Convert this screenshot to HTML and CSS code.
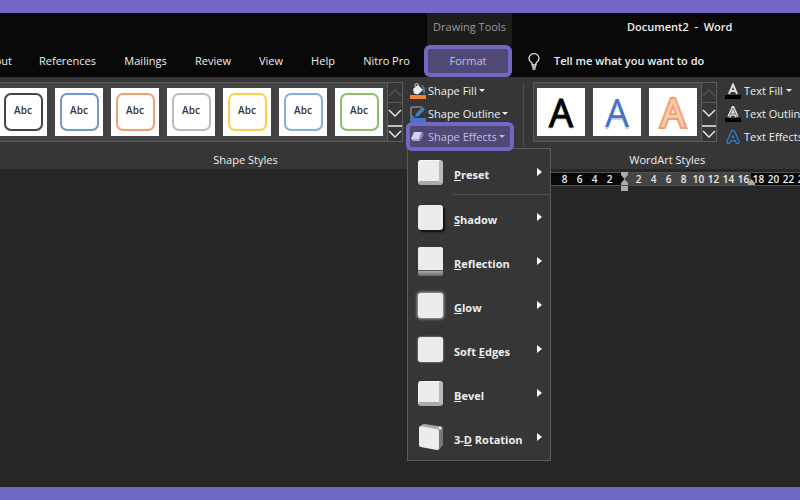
FILE: index.html
```html
<!DOCTYPE html>
<html lang="en">
<head>
<meta charset="utf-8">
<title>Document2 - Word</title>
<link rel="stylesheet" href="styles.css">
</head>
<body>
<header class="top">
  <div class="titlebar">
    <span class="context">Drawing Tools</span>
    <h1 class="doc-title">Document2&nbsp; -&nbsp; Word</h1>
  </div>
  <nav class="tabs">
    <a class="tab clipped" href="#layout">Layout</a>
    <a class="tab" href="#references">References</a>
    <a class="tab" href="#mailings">Mailings</a>
    <a class="tab" href="#review">Review</a>
    <a class="tab" href="#view">View</a>
    <a class="tab" href="#help">Help</a>
    <a class="tab" href="#nitro">Nitro Pro</a>
    <a class="tab marked" href="#format">Format</a>
    <button class="tell">
      <svg width="12" height="17" viewBox="0 0 12 17" fill="none" stroke="#eee" stroke-width="1.3"><path d="M4 12v-2C2 8.600 1 7.300 1 5.500a5 4.800 0 0 1 10 0C11 7.300 10 8.600 8 10v2zM4 14h4M4.500 16h3"/></svg>
      <span>Tell me what you want to do</span>
    </button>
  </nav>
</header>

<section class="ribbon">
  <div class="group shapes">
    <div class="tools">
      <div class="gallery">
        <div class="thumbs">
          <button class="thumb"><span class="shape black">Abc</span></button>
          <button class="thumb"><span class="shape blue">Abc</span></button>
          <button class="thumb"><span class="shape orange">Abc</span></button>
          <button class="thumb"><span class="shape gray">Abc</span></button>
          <button class="thumb"><span class="shape yellow">Abc</span></button>
          <button class="thumb"><span class="shape sky">Abc</span></button>
          <button class="thumb"><span class="shape green">Abc</span></button>
        </div>
        <div class="scroll">
          <button aria-label="Previous row" class="off"><svg width="14" height="9" viewBox="0 0 14 9"><path d="M1 8l6-6 6 6"/></svg></button>
          <button aria-label="Next row"><svg width="14" height="9" viewBox="0 0 14 9"><path d="M1 1l6 6 6-6"/></svg></button>
          <button aria-label="More styles"><svg width="14" height="14" viewBox="0 0 14 14"><path d="M0 1h14M1 6l6 6 6-6"/></svg></button>
        </div>
      </div>
      <div class="commands">
        <button class="command">
          <svg width="16" height="16" viewBox="0 0 16 16"><path d="M0 12h16v4H0z" fill="#f58233"/><path d="M3 6l5-4 5 5-5 4.500-4-1z" fill="#eee"/><path d="M5 4V1.500Q6-.5 8 1v4" fill="none" stroke="#ddd"/><path d="M11 2q5 0 4 9l-2-1V6z" fill="#397bb8"/></svg>
          <span>Shape Fill</span><i class="caret"></i>
        </button>
        <button class="command">
          <svg width="16" height="16" viewBox="0 0 16 16"><path d="M0 12h16v4H0z" fill="#3d78cf"/><path d="M12 1H1v10h3" fill="none" stroke="#aaa"/><path d="M5 11l1-3.500L12.500 1 15 3.500 8.500 10z" fill="#3c83c4"/></svg>
          <span>Shape Outline</span><i class="caret"></i>
        </button>
        <div class="effects">
          <button class="command marked">
            <svg width="13" height="10" viewBox="0 0 13 10"><path d="M3 0h8L8 7H0z" fill="#d6d0f2"/><path d="M11 0q2 1 1 4l-3 5-1-2z" fill="#8e86bb"/><path d="M0 7h8l1 2H2z" fill="#aaa2d2"/></svg>
            <span>Shape Effects</span><i class="caret"></i>
          </button>
          <div class="menu" role="menu">
            <button class="item" role="menuitem"><span class="icon bevel"></span><span class="name"><u>P</u>reset</span><i class="arrow"></i></button>
            <hr>
            <button class="item" role="menuitem"><span class="icon shadow"></span><span class="name"><u>S</u>hadow</span><i class="arrow"></i></button>
            <button class="item" role="menuitem"><span class="icon reflect"></span><span class="name"><u>R</u>eflection</span><i class="arrow"></i></button>
            <button class="item" role="menuitem"><span class="icon glow"></span><span class="name"><u>G</u>low</span><i class="arrow"></i></button>
            <button class="item" role="menuitem"><span class="icon soft"></span><span class="name">Soft <u>E</u>dges</span><i class="arrow"></i></button>
            <button class="item" role="menuitem"><span class="icon bevel"></span><span class="name"><u>B</u>evel</span><i class="arrow"></i></button>
            <button class="item" role="menuitem"><svg width="26" height="28" viewBox="0 0 26 28"><path d="M1 5l4-4 17 2q3 0 3 3v16l-4 5-18-3z" fill="#777"/><path d="M2 3l4-2 17 3-3 2z" fill="#aaa"/><path d="M1 5q0-2 2-2l16 3q2 0 2 2v17q0 2-2 2L3 24q-2 0-2-2z" fill="#ececec"/><circle cx="22" cy="5" r="1.500" fill="#fff"/></svg><span class="name">3-<u>D</u> Rotation</span><i class="arrow"></i></button>
          </div>
        </div>
      </div>
    </div>
    <h2 class="group-name">Shape Styles</h2>
  </div>

  <div class="group wordart">
    <div class="tools">
      <div class="gallery">
        <div class="thumbs">
          <button class="thumb letter ink">A</button>
          <button class="thumb letter azure">A</button>
          <button class="thumb letter peach">A</button>
        </div>
        <div class="scroll">
          <button aria-label="Previous row" class="off"><svg width="14" height="9" viewBox="0 0 14 9"><path d="M1 8l6-6 6 6"/></svg></button>
          <button aria-label="Next row"><svg width="14" height="9" viewBox="0 0 14 9"><path d="M1 1l6 6 6-6"/></svg></button>
          <button aria-label="More styles"><svg width="14" height="14" viewBox="0 0 14 14"><path d="M0 1h14M1 6l6 6 6-6"/></svg></button>
        </div>
      </div>
      <div class="commands">
        <button class="command">
          <svg width="16" height="16" viewBox="0 0 16 16"><path d="M0 12h16v4H0z" fill="#000"/><path d="M4 11L8 1.500 12 11M5.500 8h5" fill="none" stroke="#ddd" stroke-width="2"/></svg>
          <span>Text Fill</span><i class="caret"></i>
        </button>
        <button class="command">
          <svg width="16" height="16" viewBox="0 0 16 16"><path d="M0 12h16v4H0z" fill="#000"/><path d="M4 11L8 2 12 11M5.500 8h5" fill="none" stroke="#ddd" stroke-width="3.500"/><path d="M4 11L8 2 12 11M5.500 8h5" fill="none" stroke="#777" stroke-width="1"/></svg>
          <span>Text Outline</span><i class="caret"></i>
        </button>
        <button class="command">
          <svg width="16" height="16" viewBox="0 0 16 16" fill="none" stroke-linejoin="round" stroke-linecap="round"><path d="M3.500 13L8 3l4.500 10M5.500 10h5" stroke="#3a7fc8" stroke-width="4.500"/><path d="M3.500 13L8 3l4.500 10M5.500 10h5" stroke="#2b3644" stroke-width="2"/></svg>
          <span>Text Effects</span><i class="caret"></i>
        </button>
      </div>
    </div>
    <h2 class="group-name">WordArt Styles</h2>
  </div>
</section>

<main class="page">
  <div class="ruler">
    <div class="band outside"><span>8</span><span>6</span><span>4</span><span>2</span></div>
    <div class="band inside"><span>2</span><span>4</span><span>6</span><span>8</span><span>10</span><span>12</span><span>14</span><span>16</span>
      <svg class="indent" width="9" height="20" viewBox="0 0 9 20" fill="#aaa"><path d="M1 0h7v3L4.500 7 1 3zM4.500 7L8 11v2H1v-2zM1 14h7v5H1z"/></svg>
      <svg class="right-indent" width="9" height="7" viewBox="0 0 9 7" fill="#aaa"><path d="M4.500 0L8 4v2H1V4z"/></svg>
    </div>
    <div class="band rest"><span>18</span><span>20</span><span>22</span><span>24</span></div>
  </div>
</main>
</body>
</html>
```
FILE: styles.css
```css
* { box-sizing: border-box; }

body {
  margin: 0;
  min-height: 100vh;
  display: flex;
  flex-direction: column;
  border-top: 13px solid #7068c5;
  border-bottom: 13px solid #7068c5;
  background: #262626;
  color: #eee;
  font: 500 11px/16px "Open Sans", "Noto Sans", sans-serif;
  overflow: hidden;
}

button {
  border: 0;
  padding: 0;
  background: none;
  color: inherit;
  font: inherit;
}

a { color: inherit; text-decoration: none; }
h1, h2 { margin: 0; font: inherit; }

.top { background: #080808; }

.titlebar {
  display: grid;
  grid-template-columns: 427px 85px 1fr;
  height: 32px;
}

.context {
  grid-column: 2;
  padding-top: 6px;
  background: #1c1c1c;
  color: #999;
  text-align: center;
  white-space: nowrap;
}

.doc-title {
  padding: 6px 0 0 115px;
  font-weight: 600;
  white-space: nowrap;
}

.tabs {
  display: grid;
  grid-template-columns: 25px 85px 71px 64px 52px 52px 75px 88px 1fr;
  align-items: center;
  height: 32px;
}

.tab { text-align: center; white-space: nowrap; }

.clipped {
  display: flex;
  justify-content: flex-end;
  padding-right: 13px;
}

.marked {
  border: 4px solid #7068c5;
  border-radius: 6px;
  background: #4f4975;
  color: #c3bce8;
}

.tab.marked { padding: 4px 0; }

.tell {
  display: flex;
  align-items: center;
  gap: 14px;
  padding-left: 16px;
  font-weight: 600;
  white-space: nowrap;
}

.ribbon {
  display: flex;
  height: 92px;
  padding-top: 5px;
  background: #363636;
}

.group { flex: none; }
.tools { display: flex; height: 70px; }
.shapes { width: 523px; }
.wordart { padding-left: 10px; position: relative; }

.wordart::before {
  content: "";
  position: absolute;
  left: 0;
  top: 0;
  width: 1px;
  height: 66px;
  background: #4c4c4c;
}

.gallery {
  display: flex;
  height: 60px;
  border: 1px solid #5c5c5c;
  background: #424242;
}

.thumbs { display: flex; gap: 8px; padding: 5px 4px 5px 3px; }
.shapes .gallery { border-left: 0; }
.shapes .thumbs { padding-left: 0; margin-left: -1px; }

.thumb {
  display: grid;
  place-items: center;
  width: 48px;
  height: 48px;
  background: #fff;
  color: #333;
}

.shape {
  width: 39px;
  height: 38px;
  border: 2px solid;
  border-radius: 7px;
  padding-top: 6px;
  font-size: 10px;
  font-weight: 600;
  line-height: 18px;
}

.black { border-color: #444; }
.blue { border-color: #7096d6; }
.orange { border-color: #f1a171; }
.gray { border-color: #bbb; }
.yellow { border-color: #fcd04e; }
.sky { border-color: #82b1e0; }
.green { border-color: #8dbf70; }

.letter {
  font-size: 38px;
  font-weight: 500;
  line-height: 48px;
}

.ink { color: #000; text-shadow: 0 1px 2px #999; -webkit-text-stroke: 1px #000; }
.azure { color: #4472c4; text-shadow: 0 2px 1px #b9c8e6; }
.peach { color: #f8cbad; -webkit-text-stroke: 4px #f1a070; paint-order: stroke fill; }

.scroll {
  display: grid;
  grid-template-rows: 20px 20px 18px;
  width: 15px;
  border-left: 1px solid #5c5c5c;
}

.scroll button { display: grid; place-items: center; background: #363636; }
.scroll .off { border-bottom: 1px solid #5c5c5c; }
.scroll path { fill: none; stroke: #eee; stroke-width: 1.4; }
.scroll .off path { stroke: #555; }

.commands { padding-left: 7px; }

.command {
  display: flex;
  align-items: center;
  gap: 3px;
  height: 23px;
  padding-left: 1px;
  white-space: nowrap;
}

.commands > .command:first-child { margin-top: -3px; }
.shapes .commands { padding-left: 3px; }
.shapes .command { gap: 2px; padding-left: 4px; }

.caret {
  border: 3px solid transparent;
  border-top-color: currentColor;
  border-bottom: 0;
}

.effects { position: relative; }

.effects .command {
  position: relative;
  z-index: 2;
  height: 29px;
  width: 108px;
  margin-top: -3px;
  padding-left: 1px;
}

.effects .command svg { margin-right: 2px; }

.group-name { text-align: center; }
.shapes .group-name { padding-right: 32px; }
.wordart .group-name { padding-right: 14px; }

.menu {
  position: absolute;
  z-index: 1;
  top: 26px;
  left: 1px;
  width: 144px;
  padding: 1px 0;
  border: 1px solid #5c5c5c;
  background: #363636;
  font-weight: 700;
}

.item {
  display: grid;
  grid-template-columns: 26px 73px 5px;
  align-items: center;
  column-gap: 10px;
  width: 100%;
  height: 44px;
  padding-left: 10px;
  text-align: left;
  white-space: nowrap;
}

.item .name { padding-top: 5px; }

.arrow {
  border: 4px solid transparent;
  border-left: 5px solid #fff;
  border-right: 0;
}

.menu hr {
  height: 1px;
  margin: 0 0 0 45px;
  border: 0;
  background: #505050;
}

.icon {
  width: 25px;
  height: 25px;
  border-radius: 3px;
  background: #ececec;
}

.bevel {
  border: solid;
  border-width: 1px 4px 4px 1px;
  border-color: #f6f6f6 #bbb #aaa #f6f6f6;
}

.shadow { box-shadow: 2px 2px 2px #111; }

.reflect {
  height: 29px;
  border-radius: 2px;
  background: linear-gradient(#ececec 23px, #555 23px, #555 24px, #aaa 24px, #666);
}

.glow { box-shadow: 0 0 3px 1px #aaa; }
.soft { box-shadow: 0 0 2px #ccc; }

.page { flex: 1; padding-top: 3px; }

.ruler {
  display: flex;
  height: 14px;
  margin-left: 550px;
  border: 1px solid #505050;
  border-right: 0;
  background: #080808;
  font-size: 10px;
  font-weight: 600;
  line-height: 12px;
}

.band { display: flex; flex: none; }
.band span { width: 15px; text-align: center; }
.outside { padding-left: 6px; width: 73px; }

.inside {
  position: relative;
  width: 127px;
  padding-left: 7px;
  background: #444;
}

.rest { flex: 1; min-width: 0; overflow: hidden; }
.rest span { flex: none; }
.indent { position: absolute; left: -4px; top: -1px; }
.right-indent { position: absolute; right: -5px; bottom: -1px; }
```
